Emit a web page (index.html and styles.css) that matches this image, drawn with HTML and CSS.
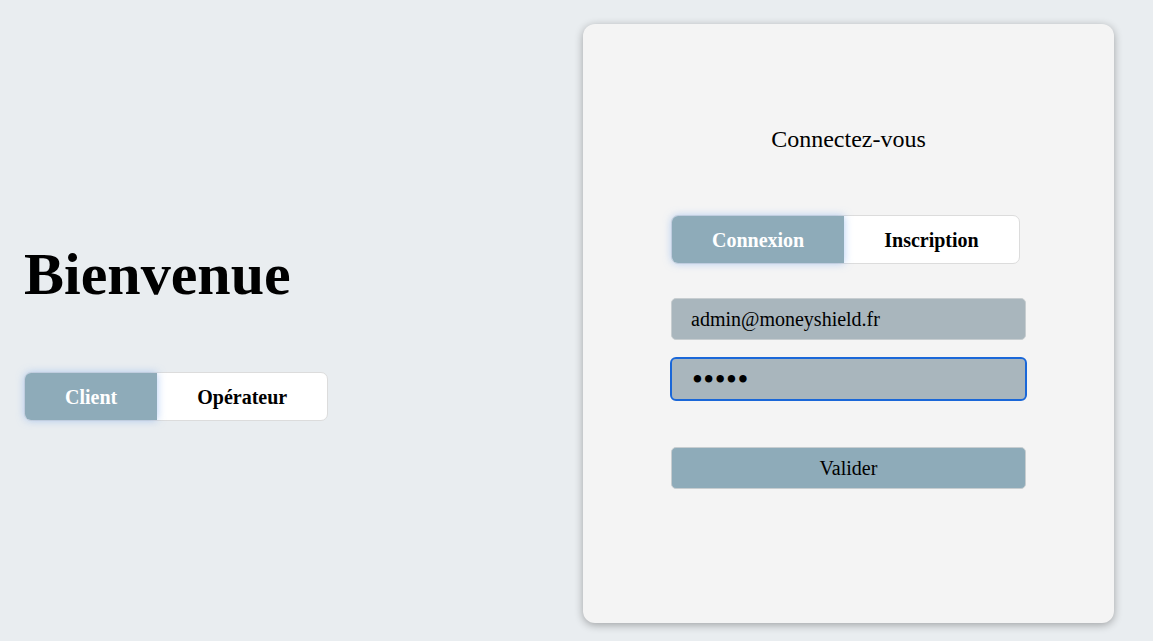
FILE: index.html
```html
<!DOCTYPE html>
<html lang="fr">
<head>
<meta charset="utf-8">
<title>MoneyShield</title>
<link rel="stylesheet" href="styles.css">
</head>
<body>
<main class="page">
  <section class="welcome">
    <h1 class="welcome-title">Bienvenue</h1>
    <div class="toggle">
      <button class="toggle-btn active" type="button">Client</button>
      <button class="toggle-btn" type="button">Opérateur</button>
    </div>
  </section>
  <section class="card">
    <h2 class="card-title">Connectez-vous</h2>
    <div class="form">
      <div class="toggle">
        <button class="toggle-btn active" type="button">Connexion</button>
        <button class="toggle-btn" type="button">Inscription</button>
      </div>
      <div class="fields">
        <input class="field" type="email" value="admin@moneyshield.fr">
        <input class="field focused" type="password" value="admin" autofocus>
      </div>
      <button class="submit" type="button">Valider</button>
    </div>
  </section>
</main>
</body>
</html>
```
FILE: styles.css
```css
html, body {
  margin: 0;
  padding: 0;
}
body {
  background: #e9edf0;
  font-family: "Liberation Serif", "Times New Roman", serif;
  color: #000;
  height: 641px;
  overflow: hidden;
}
.page {
  display: grid;
  grid-template-columns: 1fr 531px;
  padding: 24px 39px 0 24px;
}
.welcome {
  padding-top: 216px;
}
.welcome-title {
  margin: 0 0 63px 0;
  font-size: 60px;
  line-height: 69px;
  font-weight: bold;
}
.toggle {
  display: inline-flex;
  background: #fff;
  border: 1px solid #dcdcdc;
  border-radius: 7px;
}
.toggle-btn {
  font-family: "Liberation Serif", "Times New Roman", serif;
  font-size: 20px;
  font-weight: bold;
  line-height: 23px;
  padding: 13px 40px 11px;
  border: 0;
  margin: 0;
  background: transparent;
  color: #000;
  border-radius: 0 6px 6px 0;
}
.toggle-btn.active {
  background: #8eabb9;
  color: #fff;
  border-radius: 6px 0 0 6px;
  box-shadow: 0 0 8px rgba(110, 160, 235, 0.55);
  position: relative;
  z-index: 1;
}
.card {
  height: 599px;
  box-sizing: border-box;
  background: #f4f4f4;
  border-radius: 12px;
  box-shadow: 0 2px 8px rgba(0, 0, 0, 0.32);
  padding-top: 101px;
  display: flex;
  flex-direction: column;
  align-items: center;
}
.card-title {
  margin: 0 0 62px 0;
  font-size: 24px;
  line-height: 28px;
  font-weight: normal;
}
.form {
  width: 355px;
  display: flex;
  flex-direction: column;
  align-items: flex-start;
}
.fields {
  margin-top: 34px;
  width: 100%;
  display: flex;
  flex-direction: column;
  gap: 18px;
}
.field {
  box-sizing: border-box;
  width: 100%;
  height: 42px;
  background: #a9b6bd;
  border: 1px solid #c7cdd0;
  border-radius: 5px;
  padding: 1px 19px 0;
  font-family: "Liberation Serif", "Times New Roman", serif;
  font-size: 20px;
  color: #000;
  caret-color: #000;
}
.field.focused {
  outline: 2px solid #1a67d8;
  outline-offset: -1px;
  font-size: 31px;
  letter-spacing: 0.5px;
  padding-left: 20px;
}
.submit {
  margin-top: 47px;
  width: 100%;
  height: 42px;
  background: #8eabb9;
  border: 1px solid #c7cdd0;
  border-radius: 5px;
  font-family: "Liberation Serif", "Times New Roman", serif;
  font-size: 20px;
  color: #000;
}
```
